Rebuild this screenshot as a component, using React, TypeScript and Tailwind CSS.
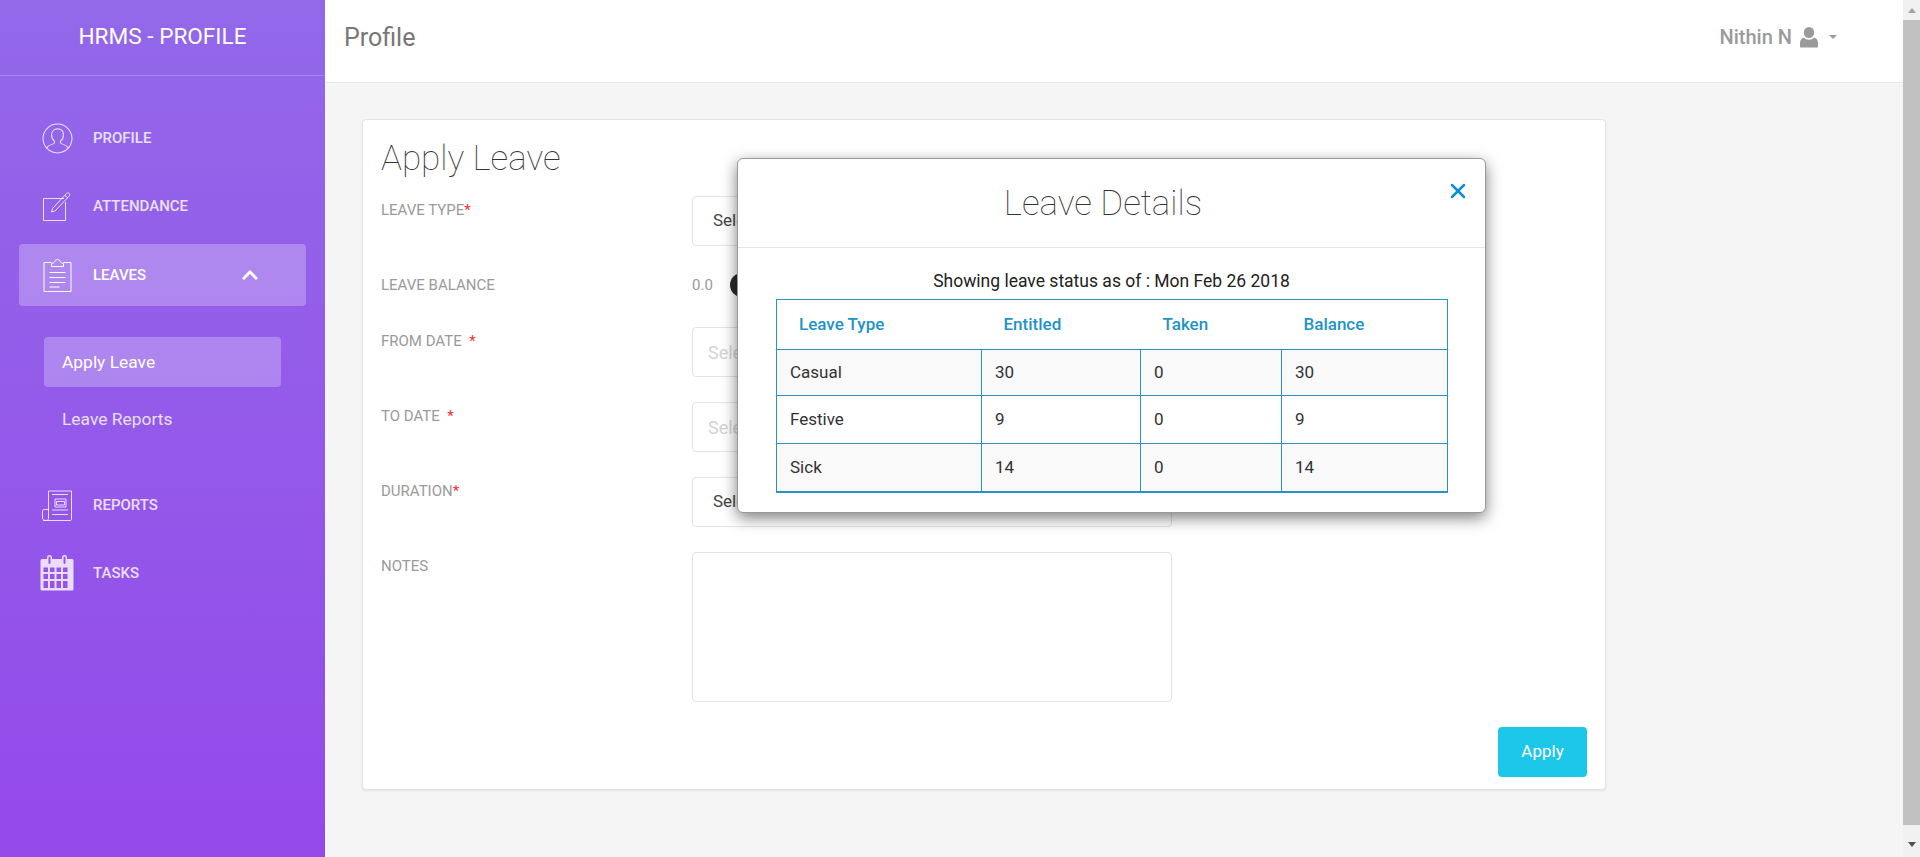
import { X } from "lucide-react";
import { FaChevronUp } from "react-icons/fa";
import type { ReactNode } from "react";

// Line icons for the side menu, drawn to match the Pe-icon-7 set.
function ProfileIcon() {
  return (
    <svg width="31" height="31" viewBox="0 0 30 30" fill="none" stroke="currentColor" strokeWidth="1">
      <circle cx="15" cy="15" r="14" />
      <path d="M4.500 24.500c1-2.400 3.400-3.400 6.300-4.300 1.200-.4 1.500-1 1.500-2.200-1.700-1.500-3-3.600-3-6.500 0-3.600 2.300-5.800 5.700-5.800s5.700 2.200 5.700 5.800c0 2.900-1.300 5-3 6.500 0 1.200.3 1.800 1.500 2.200 2.900.9 5.300 1.900 6.300 4.300" />
    </svg>
  );
}

function AttendanceIcon() {
  return (
    <svg width="30" height="30" viewBox="0 0 30 30" fill="none" stroke="currentColor" strokeWidth="1">
      <path d="M22 7.500H1.500v22h22V11" />
      <path d="M10.500 17.500 24.500 2.500c.8-.8 2-.8 2.700 0s.7 1.800 0 2.600L13 20l-3.500 1z" />
      <path d="M23 4.500l3 2.500" />
    </svg>
  );
}

function LeavesIcon() {
  return (
    <svg width="30" height="34" viewBox="0 0 30 34" fill="none" stroke="currentColor" strokeWidth="1">
      <path d="M9.500 4.500H2v29h27v-29h-7.500" />
      <path d="M9.500 8.500v-3c2-.3 3-1 3.400-2.300.5-2 4.700-2 5.200 0 .4 1.300 1.400 2 3.400 2.300v3z" />
      <path d="M7.500 14.500h16M7.500 19.500h16M7.500 24.500h16M7.500 29h10" />
    </svg>
  );
}

function ReportsIcon() {
  return (
    <svg width="32" height="31" viewBox="0 0 32 31" fill="none" stroke="currentColor" strokeWidth="1">
      <path d="M2 30.500h27c1 0 1.500-.5 1.500-1.500V1h-23v27.500c0 1.200-1 2-2.500 2s-3.500-.8-3.500-2.500v-7c0-.8.5-1.500 1.500-1.500h4.500" />
      <path d="M11 4.500h16M14 9h11v8H14zM11 20h16M11 24.500h16" />
      <path d="M15.500 11.500h8v3.500h-8z" />
    </svg>
  );
}

function TasksIcon() {
  return (
    <svg width="34" height="36" viewBox="0 0 34 36">
      <path
        fill="currentColor"
        fillRule="evenodd"
        d="M2 4h5V2.500a2.500 2.500 0 0 1 5 0V4h10V2.500a2.500 2.500 0 0 1 5 0V4h5a1.500 1.500 0 0 1 1.500 1.500V34a1.500 1.500 0 0 1-1.500 1.500H2A1.500 1.500 0 0 1 .5 34V5.500A1.500 1.500 0 0 1 2 4zM8.500 2.500V8a1 1 0 0 0 2 0V2.500a1 1 0 0 0-2 0zm15 0V8a1 1 0 0 0 2 0V2.500a1 1 0 0 0-2 0zM3.500 12.500V17H8v-4.500zm6.500 0V17h4.500v-4.500zm6.500 0V17H21v-4.500zm6.500 0V17h4.500v-4.500zm-19.500 6.500v5H8v-5zm6.500 0v5h4.500v-5zm6.500 0v5H21v-5zm6.500 0v5h4.500v-5zm-19.500 7V33H8v-7zm6.500 0v7h4.500v-7zm6.500 0v7H21v-7zm6.500 0v7h4.500v-7z"
      />
    </svg>
  );
}

function NavItem({ icon, label, active, children }: { icon: ReactNode; label: string; active?: boolean; children?: ReactNode }) {
  return (
    <div
      className={
        "mx-[19px] flex h-[62px] items-center rounded pl-[16px] text-[15px] font-medium " +
        (active ? "bg-white/25 text-white" : "text-white/80")
      }
    >
      <span className="flex w-[44px] justify-center">{icon}</span>
      <span className="ml-[14px]">{label}</span>
      {children}
    </div>
  );
}

function Sidebar() {
  return (
    <aside className="flex h-full w-[325px] shrink-0 flex-col bg-gradient-to-b from-[#9368e9] to-[#9449ea] text-white">
      <div className="flex h-[76px] shrink-0 items-center justify-center border-b border-white/20 pb-[1px] text-[22.600px] leading-none">
        HRMS - PROFILE
      </div>
      <nav className="flex flex-col pt-[31px]">
        <NavItem icon={<ProfileIcon />} label="PROFILE" />
        <div className="mt-[6px]">
          <NavItem icon={<AttendanceIcon />} label="ATTENDANCE" />
        </div>
        <div className="mt-[7px]">
          <NavItem icon={<LeavesIcon />} label="LEAVES" active>
            <FaChevronUp className="ml-auto mr-[47px] h-[18px] w-[18px]" />
          </NavItem>
        </div>
        <div className="flex flex-col gap-[7px] px-[44px] pt-[31px] text-[17.400px]">
          <div className="flex h-[50px] w-[237px] items-center rounded bg-white/25 pl-[18px]">Apply Leave</div>
          <div className="flex h-[50px] items-center pl-[18px] text-white/80">Leave Reports</div>
        </div>
        <div className="mt-[30px]">
          <NavItem icon={<ReportsIcon />} label="REPORTS" />
        </div>
        <div className="mt-[6px]">
          <NavItem icon={<TasksIcon />} label="TASKS" />
        </div>
      </nav>
    </aside>
  );
}

function TopBar() {
  return (
    <header className="flex h-[83px] shrink-0 items-center justify-between border-b border-[#e7e7e7] bg-white pb-[8px] pl-[19px] pr-[66px]">
      <span className="text-[25px] leading-none text-[#777]">Profile</span>
      <div className="flex items-center text-[#9a9a9a]">
        <span className="text-[20px] font-medium">Nithin N</span>
        <svg className="ml-[8px]" width="18" height="21" viewBox="0 0 18 21" fill="currentColor">
          <ellipse cx="9" cy="5.500" rx="5.200" ry="5.500" />
          <path d="M1 20.500c-.6 0-1-.4-1-1v-3.500c0-3 1.800-5 4-5.500 1 1.500 3 2.200 5 2.200s4-.7 5-2.200c2.200.5 4 2.500 4 5.500v3.500c0 .6-.4 1-1 1z" />
        </svg>
        <span className="ml-[11px] h-0 w-0 border-x-[4.500px] border-t-[4.500px] border-x-transparent border-t-[#9a9a9a]" />
      </div>
    </header>
  );
}

function FormRow({ label, mark, height, children }: { label: string; mark?: string; height: string; children: ReactNode }) {
  return (
    <div className={"flex " + height}>
      <label className="w-[311px] shrink-0 whitespace-pre pt-[4px] text-[15px] leading-[20px] text-[#9a9a9a]">
        {label}
        {mark && <span className="text-[#ff2d2d]">{mark}</span>}
      </label>
      {children}
    </div>
  );
}

function FieldBox({ text, muted }: { text: string; muted?: boolean }) {
  return (
    <div
      className={
        "flex h-[50px] w-[480px] items-center rounded border border-[#e3e3e3] bg-white " +
        (muted ? "pl-[15px] text-[18px] text-[#d4d4d4]" : "pl-[20px] text-[17px] text-[#444]")
      }
    >
      {text}
    </div>
  );
}

function ApplyForm() {
  return (
    <section className="flex h-[671px] w-[1244px] flex-col rounded border border-[#e3e3e3] bg-white pl-[18px] pr-[18px] shadow-[0_1px_2px_rgba(0,0,0,0.08)]">
      <h2 className="mb-[12px] mt-[14px] text-[35px] font-thin leading-[50px] text-[#333]">Apply Leave</h2>
      <FormRow label="LEAVE TYPE" mark="*" height="h-[75px]">
        <FieldBox text="Select" />
      </FormRow>
      <FormRow label="LEAVE BALANCE" height="h-[56px]">
        <div className="flex h-[25px] items-center pt-[3px] text-[15px] text-[#9a9a9a]">
          0.0
          <span className="ml-[17px] h-[24px] w-[24px] rounded-full bg-[#2b2b2b]" />
        </div>
      </FormRow>
      <FormRow label="FROM DATE " mark=" *" height="h-[75px]">
        <FieldBox text="Select" muted />
      </FormRow>
      <FormRow label="TO DATE " mark=" *" height="h-[75px]">
        <FieldBox text="Select" muted />
      </FormRow>
      <FormRow label="DURATION" mark="*" height="h-[75px]">
        <FieldBox text="Select" />
      </FormRow>
      <FormRow label="NOTES" height="h-[150px]">
        <div className="h-[150px] w-[480px] rounded border border-[#e3e3e3] bg-white" />
      </FormRow>
      <div className="mt-[25px] flex justify-end">
        <button className="h-[50px] w-[89px] rounded bg-[#1dc7ea] text-[17px] text-white">Apply</button>
      </div>
    </section>
  );
}

const leaveRows = [
  { type: "Casual", entitled: "30", taken: "0", balance: "30", rowClass: "h-[46px] bg-[#f9f9f9]" },
  { type: "Festive", entitled: "9", taken: "0", balance: "9", rowClass: "h-[48px] bg-white" },
  { type: "Sick", entitled: "14", taken: "0", balance: "14", rowClass: "h-[48px] bg-[#f9f9f9]" },
];

function LeaveModal() {
  return (
    <div className="absolute left-[737px] top-[158px] h-[355px] w-[749px] rounded-[6px] border border-[#999] bg-white shadow-[0_5px_15px_rgba(0,0,0,0.5)]">
      <div className="relative flex h-[89px] items-center justify-center border-b border-[#e5e5e5] pr-[17px]">
        <h3 className="text-[35px] font-thin leading-none text-[#333]">Leave Details</h3>
        <X className="absolute right-[15px] top-[20px] h-[24px] w-[24px] text-[#0c8fd6]" strokeWidth={2.500} />
      </div>
      <p className="mt-[23px] text-center text-[17.500px] leading-[20px] text-[#222]">Showing leave status as of : Mon Feb 26 2018</p>
      <table className="ml-[38px] mt-[8px] w-[671px] table-fixed border-collapse border border-b-2 border-[#2a93c4] text-[17px] text-[#333]">
        <colgroup>
          <col className="w-[205px]" />
          <col className="w-[159px]" />
          <col className="w-[141px]" />
          <col className="w-[166px]" />
        </colgroup>
        <thead>
          <tr className="h-[50px] border-b border-[#2a93c4] text-left text-[#1e93c8]">
            <th className="pl-[22px] font-medium">Leave Type</th>
            <th className="pl-[22px] font-medium">Entitled</th>
            <th className="pl-[22px] font-medium">Taken</th>
            <th className="pl-[22px] font-medium">Balance</th>
          </tr>
        </thead>
        <tbody>
          {leaveRows.map((row) => (
            <tr key={row.type} className={row.rowClass}>
              <td className="border border-[#2a93c4] pl-[13px]">{row.type}</td>
              <td className="border border-[#2a93c4] pl-[13px]">{row.entitled}</td>
              <td className="border border-[#2a93c4] pl-[13px]">{row.taken}</td>
              <td className="border border-[#2a93c4] pl-[13px]">{row.balance}</td>
            </tr>
          ))}
        </tbody>
      </table>
    </div>
  );
}

function ScrollBar() {
  return (
    <div className="flex h-full w-[17px] shrink-0 flex-col items-center bg-[#f1f1f1]">
      <div className="flex h-[20px] w-full items-center justify-center">
        <span className="h-0 w-0 border-x-[4.500px] border-b-[5px] border-x-transparent border-b-[#a3a3a3]" />
      </div>
      <div className="w-[17px] flex-1 bg-[#c1c1c1]" />
      <div className="flex h-[32px] w-full items-center justify-center pt-[6px]">
        <span className="h-0 w-0 border-x-[4.500px] border-t-[5px] border-x-transparent border-t-[#505050]" />
      </div>
    </div>
  );
}

export default function App() {
  return (
    <div className="relative flex h-[857px] w-[1920px] overflow-hidden bg-[#f5f5f5] font-['Roboto',sans-serif]">
      <Sidebar />
      <main className="flex min-w-0 flex-1 flex-col">
        <TopBar />
        <div className="pl-[37px] pt-[36px]">
          <ApplyForm />
        </div>
      </main>
      <ScrollBar />
      <LeaveModal />
    </div>
  );
}
